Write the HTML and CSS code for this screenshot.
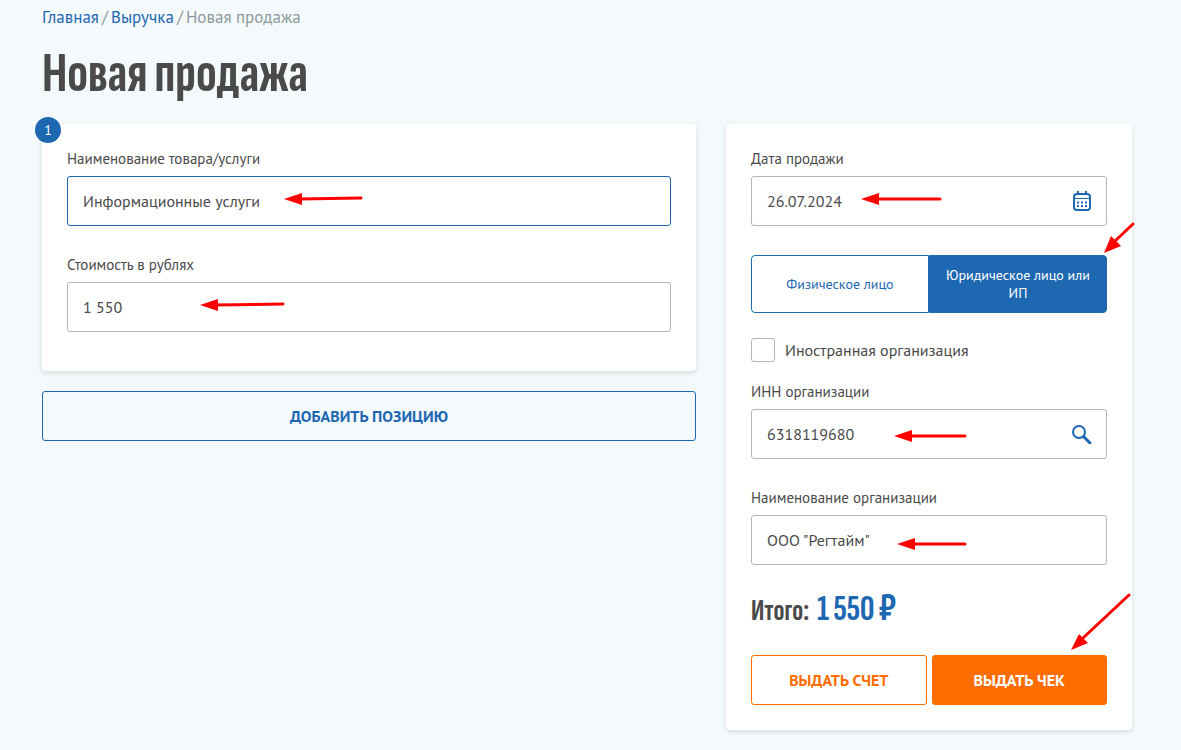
FILE: index.html
```html
<!DOCTYPE html>
<html lang="ru">
<head>
  <meta charset="UTF-8" />
  <meta name="viewport" content="width=device-width, initial-scale=1" />
  <title>Новая продажа</title>
  <link rel="stylesheet" href="styles.css">
</head>
<body>
  <nav class="breadcrumbs">
    <a href="#">Главная</a><span>/</span><a href="#">Выручка</a><span>/</span><span>Новая продажа</span>
  </nav>

  <h1>Новая продажа</h1>

  <form class="sale">
    <div class="positions">
      <section class="card">
        <span class="number">1</span>
        <div class="field">
          <label for="itemName">Наименование товара/услуги</label>
          <div class="control">
            <input type="text" id="itemName" class="active" value="Информационные услуги" />
            <svg class="arrow arrow-name" width="82" height="14" viewBox="0 0 82 14"><path class="line" d="M14 7 77 6" /><path d="M0 7 18 1V13Z" /></svg>
          </div>
        </div>
        <div class="field">
          <label for="itemPrice">Стоимость в рублях</label>
          <div class="control">
            <input type="text" id="itemPrice" value="1 550" />
            <svg class="arrow arrow-price" width="88" height="14" viewBox="0 0 88 14"><path class="line" d="M14 7 83 6" /><path d="M0 7 18 1V13Z" /></svg>
          </div>
        </div>
      </section>
      <button type="button" class="btn btn-add">Добавить позицию</button>
    </div>

    <section class="card summary">
      <div class="field">
        <label for="saleDate">Дата продажи</label>
        <div class="control">
          <input type="text" id="saleDate" value="26.07.2024" />
          <button type="button" class="icon" aria-label="Календарь">
            <svg width="20" height="22" viewBox="0 0 20 22">
              <rect x="2" y="4" width="16" height="16" rx="3" />
              <path class="thin" d="M2 8.500H18" />
              <path d="M6 1V4M14 1V4" />
              <path class="dots" d="M5 12.500H15M5 16H15" />
            </svg>
          </button>
          <svg class="arrow arrow-date" width="84" height="14" viewBox="0 0 84 14"><path class="line" d="M14 7H79" /><path d="M0 7 18 1V13Z" /></svg>
        </div>
      </div>

      <div class="control toggle">
        <button type="button">Физическое лицо</button>
        <button type="button" class="selected">Юридическое лицо или ИП</button>
        <svg class="arrow arrow-type" width="32" height="32" viewBox="0 0 32 32"><path class="line" d="M10 20 29 2" /><path d="M0 31 7 14 17 24Z" /></svg>
      </div>

      <label class="check"><input type="checkbox" />Иностранная организация</label>

      <div class="field">
        <label for="inn">ИНН организации</label>
        <div class="control">
          <input type="text" id="inn" value="6318119680" />
          <button type="button" class="icon" aria-label="Найти">
            <svg width="20" height="20" viewBox="0 0 20 20">
              <circle cx="7" cy="8" r="6" />
              <path class="handle" d="M12 13 18 19" />
            </svg>
          </button>
          <svg class="arrow arrow-inn" width="76" height="14" viewBox="0 0 76 14"><path class="line" d="M14 7H71" /><path d="M0 7 18 1V13Z" /></svg>
        </div>
      </div>

      <div class="field">
        <label for="orgName">Наименование организации</label>
        <div class="control">
          <input type="text" id="orgName" value="ООО &quot;Регтайм&quot;" />
          <svg class="arrow arrow-org" width="73" height="14" viewBox="0 0 73 14"><path class="line" d="M14 7H68" /><path d="M0 7 18 1V13Z" /></svg>
        </div>
      </div>

      <div class="total"><span>Итого:</span><span class="sum">1 550 ₽</span></div>

      <div class="control actions">
        <button type="button" class="btn btn-bill">Выдать счет</button>
        <button type="submit" class="btn btn-check">Выдать чек</button>
        <svg class="arrow arrow-submit" width="62" height="58" viewBox="0 0 62 58"><path class="line" d="M12 45 58 2" /><path d="M0 57 8 41 17 50Z" /></svg>
      </div>
    </section>
  </form>
</body>
</html>
```

FILE: styles.css
```css
:root {
  --bg: #f4f9fc;
  --fg: #4a4a4a;
  --blue: #1e68b2;
  --orange: #ff6c00;
  --muted: #8d9a9b;
  --border: #b5b5b5;
  --condensed: "Sofia Sans Extra Condensed", "PT Sans Narrow", "Liberation Sans Narrow", sans-serif;
}

* {
  box-sizing: border-box;
}

body {
  margin: 0;
  padding: 6px 49px 20px 42px;
  background: var(--bg);
  color: var(--fg);
  font: 16px/20px "PT Sans", "Noto Sans", sans-serif;
}

input,
button {
  font: inherit;
}

.breadcrumbs {
  display: flex;
  gap: 3px;
  color: var(--muted);
  font-size: 17px;
  line-height: 22px;
}

.breadcrumbs a {
  color: var(--blue);
  text-decoration: none;
}

h1 {
  margin: 16px 0 20px;
  font: bold 57px/60px var(--condensed);
}

.sale {
  display: grid;
  grid-template-columns: 1fr 406px;
  align-items: start;
  gap: 30px;
}

.card {
  position: relative;
  padding: 25px 25px 10px;
  background: #fff;
  border-radius: 4px;
  box-shadow: 0 2px 5px rgba(0, 0, 0, 0.12);
}

.summary {
  padding-bottom: 25px;
}

.number {
  position: absolute;
  top: -7px;
  left: -7px;
  width: 26px;
  height: 26px;
  border-radius: 50%;
  background: var(--blue);
  color: #fff;
  font-size: 14px;
  line-height: 26px;
  text-align: center;
}

.field {
  margin-bottom: 29px;
}

.field label {
  display: block;
  margin-bottom: 7px;
  font-size: 15px;
}

.control {
  position: relative;
}

input[type="text"] {
  display: block;
  width: 100%;
  height: 50px;
  padding: 0 15px;
  border: 1px solid var(--border);
  border-radius: 3px;
  background: #fff;
  color: var(--fg);
}

input[type="text"].active {
  border-color: var(--blue);
}

.icon {
  position: absolute;
  top: 0;
  right: 0;
  display: flex;
  align-items: center;
  justify-content: center;
  width: 50px;
  height: 50px;
  padding: 0;
  border: none;
  background: none;
}

.icon svg {
  fill: none;
  stroke: var(--blue);
  stroke-width: 2;
}

.icon .thin {
  stroke-width: 1;
}

.icon .dots {
  stroke-dasharray: 2 2;
}

.icon .handle {
  stroke-width: 3;
  stroke-linecap: round;
}

.toggle {
  display: flex;
  height: 58px;
  margin-bottom: 25px;
}

.toggle button {
  flex: 1;
  padding: 0 12px;
  border: 1px solid var(--blue);
  border-radius: 4px 0 0 4px;
  background: #fff;
  color: var(--blue);
  font-size: 14px;
  line-height: 18px;
}

.toggle .selected {
  border-radius: 0 4px 4px 0;
  background: var(--blue);
  color: #fff;
}

.check {
  display: flex;
  align-items: center;
  gap: 10px;
  margin-bottom: 20px;
}

.check input {
  appearance: none;
  width: 24px;
  height: 24px;
  margin: 0;
  border: 1px solid var(--border);
  border-radius: 3px;
  background: #fff;
}

.total {
  display: flex;
  align-items: baseline;
  gap: 8px;
  height: 32px;
  margin-bottom: 29px;
  font: bold 30px/32px var(--condensed);
}

.sum {
  color: var(--blue);
  font-size: 36px;
}

.btn {
  height: 50px;
  border: 1px solid;
  border-radius: 3px;
  background: none;
  font-weight: bold;
  text-transform: uppercase;
}

.btn-add {
  width: 100%;
  margin-top: 20px;
  color: var(--blue);
}

.actions {
  display: flex;
  gap: 5px;
}

.actions .btn {
  flex: 1;
}

.btn-bill {
  color: var(--orange);
}

.btn-check {
  border-color: var(--orange);
  background: var(--orange);
  color: #fff;
}

/* red pointers over the form */
.arrow {
  position: absolute;
  fill: #f00;
  pointer-events: none;
}

.arrow .line {
  stroke: #f00;
  stroke-width: 3;
  stroke-linecap: round;
}

.arrow-name {
  top: 16px;
  left: 217px;
}

.arrow-price {
  top: 16px;
  left: 133px;
}

.arrow-date {
  top: 16px;
  left: 110px;
}

.arrow-type {
  top: -33px;
  right: -29px;
}

.arrow-inn {
  top: 20px;
  left: 143px;
}

.arrow-org {
  top: 22px;
  left: 146px;
}

.arrow-submit {
  top: -62px;
  right: -26px;
}
```
